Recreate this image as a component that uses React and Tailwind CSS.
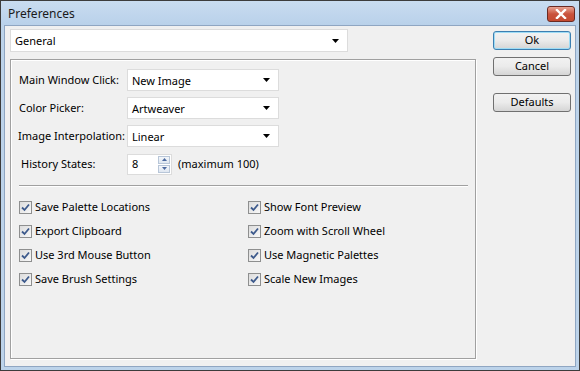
import React from "react";

const font = { fontFamily: '"Noto Sans", "Liberation Sans", sans-serif' };

function Arrow() {
  return (
    <svg width="7" height="4" viewBox="0 0 7 4" className="block">
      <path d="M0 0H7L3.5 4Z" fill="#000" />
    </svg>
  );
}

function Select({ value, className }) {
  return (
    <div className={`flex items-center justify-between bg-white border border-[#dcdcdc] pl-[4px] pr-[8px] ${className}`}>
      <span className="leading-none">{value}</span>
      <Arrow />
    </div>
  );
}

function Check({ label }) {
  return (
    <div className="flex items-center h-[24px] whitespace-nowrap">
      <div className="w-[13px] h-[13px] border border-[#8e8f8f] bg-gradient-to-br from-[#dcdcdc] to-[#f8f8f8] p-[1px] flex items-center justify-center">
        <svg width="9" height="9" viewBox="0 0 9 9">
          <path d="M1 4.5L3.5 7L8 1.5" fill="none" stroke="#3d5a8c" strokeWidth="1.8" />
        </svg>
      </div>
      <span className="ml-[3px]">{label}</span>
    </div>
  );
}

function Button({ children, def }) {
  return (
    <div
      className={`h-[19px] w-[78px] rounded-[3px] border flex items-center justify-center bg-gradient-to-b from-[#f2f2f2] via-[#ebebeb] to-[#d5d5d5] ${
        def ? "border-[#3c7fb1] shadow-[inset_0_0_0_1px_#9edcf5]" : "border-[#707070]"
      }`}
    >
      {children}
    </div>
  );
}

export default function App() {
  return (
    <div
      className="w-[580px] h-[371px] bg-[#bcd3ea] border border-[#3c3c3c] flex flex-col text-[11px] text-black whitespace-nowrap"
      style={font}
    >
      {/* title bar */}
      <div className="h-[24px] flex items-center justify-between pl-[7px] pr-[4px] bg-gradient-to-b from-[#c9dcf0] to-[#b9d1ea] shrink-0">
        <span className="text-[12px] text-[#1a1a1a] mt-[2px]">Preferences</span>
        <div className="w-[28px] h-[16px] mt-[2px] rounded-[3px] border border-[#6b2a22] bg-gradient-to-b from-[#e8a493] via-[#c9533d] to-[#c44a30] flex items-center justify-center">
          <svg width="12" height="10" viewBox="0 0 12 10">
            <path d="M2 1L10 9M10 1L2 9" stroke="#fff" strokeWidth="2.4" strokeLinecap="square" />
          </svg>
        </div>
      </div>
      {/* client */}
      <div className="flex-1 mx-[3px] mb-[3px] border border-[#8fa6c2] bg-[#f0f0f0] flex">
        <div className="pl-[5px] pt-[3px] flex flex-col">
          <Select value="General" className="w-[338px] h-[23px]" />
          <div className="mt-[7px] w-[466px] h-[300px] border border-[#a0a0a0] shadow-[1px_1px_0_#fff,inset_1px_1px_0_#fff] pl-[8px] pr-[7px] pt-[9px]">
            <div className="flex items-center h-[22px]">
              <span className="w-[108px]">Main Window Click:</span>
              <Select value="New Image" className="w-[152px] h-[22px]" />
            </div>
            <div className="flex items-center h-[22px] mt-[6px]">
              <span className="w-[108px]">Color Picker:</span>
              <Select value="Artweaver" className="w-[152px] h-[22px]" />
            </div>
            <div className="flex items-center h-[22px] mt-[6px]">
              <span className="w-[108px] -ml-[1px] mr-[1px]">Image Interpolation:</span>
              <Select value="Linear" className="w-[152px] h-[22px]" />
            </div>
            <div className="flex items-center h-[22px] mt-[6px]">
              <span className="w-[108px] pl-[2px]">History States:</span>
              <div className="w-[45px] h-[21px] bg-white border border-[#dcdcdc] flex items-stretch">
                <span className="flex-1 pl-[4px] flex items-center">8</span>
                <div className="w-[14px] flex flex-col p-[1px] gap-[1px]">
                  <div className="flex-1 bg-gradient-to-b from-[#f3f6fa] to-[#dfe7f1] border border-[#b8c6d8] flex items-center justify-center">
                    <svg width="5" height="3" viewBox="0 0 5 3"><path d="M0 3H5L2.5 0Z" fill="#4d6aa0" /></svg>
                  </div>
                  <div className="flex-1 bg-gradient-to-b from-[#f3f6fa] to-[#dfe7f1] border border-[#b8c6d8] flex items-center justify-center">
                    <svg width="5" height="3" viewBox="0 0 5 3"><path d="M0 0H5L2.5 3Z" fill="#4d6aa0" /></svg>
                  </div>
                </div>
              </div>
              <span className="ml-[6px]">(maximum 100)</span>
            </div>
            <div className="mt-[10px] h-[2px] border-t border-[#a0a0a0] border-b border-b-white" />
            <div className="mt-[8px] grid grid-cols-[229px_1fr]">
              <div className="flex flex-col">
                <Check label="Save Palette Locations" />
                <Check label="Export Clipboard" />
                <Check label="Use 3rd Mouse Button" />
                <Check label="Save Brush Settings" />
              </div>
              <div className="flex flex-col">
                <Check label="Show Font Preview" />
                <Check label="Zoom with Scroll Wheel" />
                <Check label="Use Magnetic Palettes" />
                <Check label="Scale New Images" />
              </div>
            </div>
          </div>
        </div>
        <div className="ml-[17px] pt-[5px] flex flex-col">
          <Button def>Ok</Button>
          <div className="mt-[7px]"><Button>Cancel</Button></div>
          <div className="mt-[17px]"><Button>Defaults</Button></div>
        </div>
      </div>
    </div>
  );
}
